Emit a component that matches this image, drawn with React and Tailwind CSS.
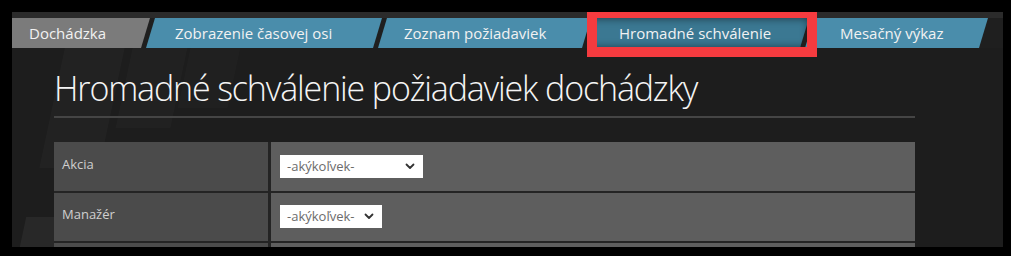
import React from "react";

const font = { fontFamily: '"Open Sans", "Noto Sans", "Liberation Sans", sans-serif' };

function Chevron() {
  return (
    <svg width="10" height="7" viewBox="0 0 10 7" className="shrink-0">
      <path d="M1.5 1.5 L5 5 L8.5 1.5" fill="none" stroke="#333" strokeWidth="1.8" strokeLinecap="round" strokeLinejoin="round" />
    </svg>
  );
}

function Select({ w }) {
  return (
    <div className={`flex items-center justify-between bg-white h-[23px] pl-[7px] pr-[8px] ${w}`}>
      <span className="text-[13px] text-[#6b6b6b] leading-none">-akýkoľvek-</span>
      <Chevron />
    </div>
  );
}

export default function App() {
  return (
    <div className="w-[1011px] h-[256px] bg-black pt-[12px] pl-[12px]" style={font}>
      <div className="relative w-[991px] h-[235px] bg-[#1d1d1d] overflow-hidden flex flex-col">
        {/* faint background streaks */}
        <div className="absolute left-[40px] top-[36px] w-[60px] h-[120px] bg-white/[0.025] -skew-x-12" />
        <div className="absolute left-[112px] top-[36px] w-[55px] h-[80px] bg-white/[0.02] -skew-x-12" />
        <div className="absolute left-[172px] top-[36px] w-[50px] h-[60px] bg-white/[0.015] -skew-x-12" />
        <div className="absolute left-[10px] top-[205px] w-[40px] h-[40px] bg-white/[0.05] -skew-x-12" />

        <div className="h-[6px] bg-[#2b2b2b] shrink-0" />
        <div className="flex h-[30px] shrink-0 bg-[#1f1f1f] text-[15px] text-[#f2f2f2] leading-none">
          <div
            className="w-[138px] h-full bg-[#7b7b7b] flex items-center pl-[17px]"
            style={{ clipPath: "polygon(0 0, 100% 0, calc(100% - 9px) 100%, 0 100%)" }}
          >
            Dochádzka
          </div>
          <div
            className="w-[236px] ml-[-4px] h-full bg-[#4a8dab] flex items-center pl-[29px]"
            style={{ clipPath: "polygon(9px 0, 100% 0, calc(100% - 9px) 100%, 0 100%)" }}
          >
            Zobrazenie časovej osi
          </div>
          <div
            className="w-[213px] ml-[-4px] h-full bg-[#4a8dab] flex items-center pl-[26px]"
            style={{ clipPath: "polygon(9px 0, 100% 0, calc(100% - 9px) 100%, 0 100%)" }}
          >
            Zoznam požiadaviek
          </div>
          <div
            className="w-[222px] ml-[-4px] h-full bg-[#3b7892] shadow-[inset_0_0_8px_rgba(0,0,0,0.6)] flex items-center pl-[32px]"
            style={{ clipPath: "polygon(9px 0, 100% 0, calc(100% - 9px) 100%, 0 100%)" }}
          >
            Hromadné schválenie
          </div>
          <div
            className="w-[183px] ml-[-4px] h-full bg-[#4a8dab] flex items-center pl-[35px]"
            style={{ clipPath: "polygon(9px 0, 100% 0, calc(100% - 9px) 100%, 0 100%)" }}
          >
            Mesačný výkaz
          </div>
        </div>

        <div className="relative ml-[42px] w-[861px] flex flex-col">
          <h1 className="mt-[20px] text-[34px] leading-[40px] font-light text-[#f4f4f4] tracking-[-1.15px]">
            Hromadné schválenie požiadaviek dochádzky
          </h1>
          <div className="mt-[8px] h-[2px] bg-[#454545]" />
          <div className="mt-[24px] flex flex-col gap-[2px] bg-[#242424]">
            <div className="flex h-[49px]">
              <div className="w-[214px] bg-[#4b4b4b] pl-[8px] pt-[13px] text-[13px] text-[#cfcfcf]">Akcia</div>
              <div className="ml-[3px] flex-1 bg-[#5e5e5e] pl-[9px] pt-[13px]">
                <Select w="w-[143px]" />
              </div>
            </div>
            <div className="flex h-[48px]">
              <div className="w-[214px] bg-[#4b4b4b] pl-[8px] pt-[12px] text-[13px] text-[#cfcfcf]">Manažér</div>
              <div className="ml-[3px] flex-1 bg-[#5e5e5e] pl-[9px] pt-[12px]">
                <Select w="w-[102px]" />
              </div>
            </div>
            <div className="flex h-[20px]">
              <div className="w-[214px] bg-[#4b4b4b]" />
              <div className="ml-[3px] flex-1 bg-[#5e5e5e]" />
            </div>
          </div>
        </div>

        <div className="absolute left-[575px] top-[-4px] w-[230px] h-[49px] border-[10px] border-[#f53b3f]" />
      </div>
    </div>
  );
}
